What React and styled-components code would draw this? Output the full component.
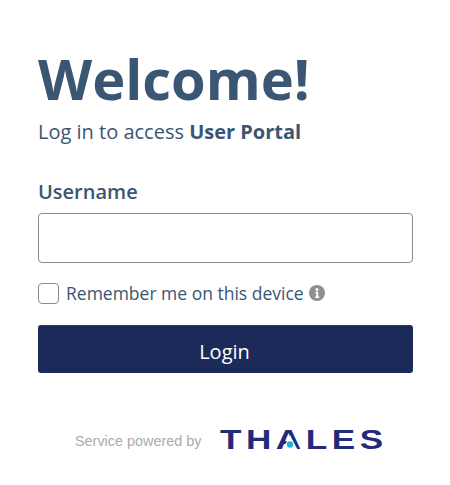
import React from 'react';
import styled, { createGlobalStyle } from 'styled-components';

const GlobalStyle = createGlobalStyle`
  body {
    margin: 0;
    background: #fff;
    font-family: "Open Sans", "Liberation Sans", sans-serif;
  }
`;

const InfoIcon = () => (
  <svg width="16" height="16" viewBox="0 0 16 16" aria-hidden="true">
    <circle cx="8" cy="8" r="8" fill="#8f8f8f" />
    <circle cx="8" cy="4.4" r="1.5" fill="#fff" />
    <path d="M6.3 6.7h2.9v4.9h1v1.3H6.2v-1.3h1V8H6.3z" fill="#fff" />
  </svg>
);

const ThalesLogo = () => (
  <svg width="170" height="24" viewBox="0 0 170 24" aria-label="Thales">
    <LogoText x="0" y="20" transform="scale(1.3 1)" letterSpacing="3.5">
      THALES
    </LogoText>
    <path d="M62.5 20.5 L70 6 L77.5 20.5 Z" fill="#fff" />
    <circle cx="70" cy="15.5" r="3.2" fill="#1fb3d6" />
  </svg>
);

const App = () => (
  <Page>
    <GlobalStyle />
    <Title>Welcome!</Title>
    <Subtitle>
      Log in to access <strong>User Portal</strong>
    </Subtitle>
    <Label htmlFor="username">Username</Label>
    <Input id="username" type="text" />
    <RememberRow>
      <Checkbox type="checkbox" />
      <RememberText>Remember me on this device</RememberText>
      <InfoIcon />
    </RememberRow>
    <LoginButton type="button">Login</LoginButton>
    <Footer>
      <Powered>Service powered by</Powered>
      <ThalesLogo />
    </Footer>
  </Page>
);

export default App;

const Page = styled.div`
  width: 450px;
  height: 485px;
  box-sizing: border-box;
  padding: 37px 37px 0 38px;
  overflow: hidden;
`;

const Title = styled.h1`
  margin: 0 0 1px;
  font-size: 56px;
  line-height: 82px;
  font-weight: 700;
  color: #3a5672;
`;

const Subtitle = styled.p`
  margin: 0;
  font-size: 20px;
  line-height: 24px;
  color: #3a5672;
  strong {
    font-weight: 700;
  }
`;

const Label = styled.label`
  display: block;
  margin-top: 35px;
  font-size: 20px;
  line-height: 26px;
  font-weight: 600;
  color: #3a5672;
`;

const Input = styled.input`
  display: block;
  width: 100%;
  height: 50px;
  box-sizing: border-box;
  margin-top: 8px;
  border: 1px solid #8a8a8a;
  border-radius: 4px;
  background: #fff;
`;

const RememberRow = styled.div`
  display: flex;
  align-items: center;
  height: 22px;
  margin-top: 19px;
`;

const Checkbox = styled.input`
  appearance: none;
  width: 21px;
  height: 21px;
  box-sizing: border-box;
  margin: 0 7px 0 0;
  border: 1px solid #8a8a8a;
  border-radius: 4px;
  background: #fff;
`;

const RememberText = styled.span`
  margin-right: 5px;
  font-size: 17.5px;
  line-height: 22px;
  color: #3a5672;
`;

const LoginButton = styled.button`
  display: block;
  width: 100%;
  height: 48px;
  margin-top: 21px;
  padding: 4px 2px 0 0;
  border: none;
  border-top: 1px solid #2b3a66;
  border-radius: 3px;
  background: #1b2a59;
  color: #fff;
  font-family: inherit;
  font-size: 20px;
`;

const Footer = styled.div`
  display: flex;
  align-items: center;
  height: 24px;
  margin-top: 56px;
  padding-left: 37px;
`;

const Powered = styled.span`
  width: 145px;
  font-family: "Liberation Sans", sans-serif;
  font-size: 14.4px;
  color: #ababab;
`;

const LogoText = styled.text`
  font-family: "Liberation Sans", sans-serif;
  font-size: 27px;
  font-weight: 700;
  fill: #232a7a;
`;
